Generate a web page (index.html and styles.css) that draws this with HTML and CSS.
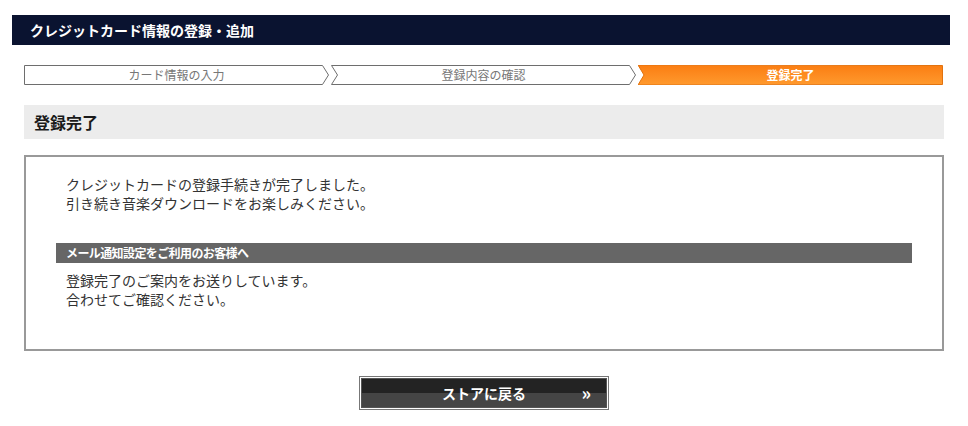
FILE: index.html
```html
<!DOCTYPE html>
<html lang="ja">
<head>
  <meta charset="UTF-8" />
  <title>クレジットカード情報の登録・追加</title>
  <link rel="stylesheet" href="styles.css">
</head>
<body>
  <header class="page-head">
    <h1>クレジットカード情報の登録・追加</h1>
  </header>
  <main class="wrap">
    <ol class="steps">
      <li class="step">
        <svg class="step-shape" width="305" height="20" viewBox="0 0 305 20">
          <polygon points="0.5,0.5 298.5,0.5 304.5,10 298.5,19.5 0.5,19.5" fill="#fff" stroke="#6e6e6e" />
        </svg>
        <span>カード情報の入力</span>
      </li>
      <li class="step">
        <svg class="step-shape" width="305" height="20" viewBox="0 0 305 20">
          <polygon points="0.5,0.5 298.5,0.5 304.5,10 298.5,19.5 0.5,19.5 6.5,10" fill="#fff" stroke="#6e6e6e" />
        </svg>
        <span>登録内容の確認</span>
      </li>
      <li class="step current">
        <svg class="step-shape" width="305" height="20" viewBox="0 0 305 20">
          <defs>
            <linearGradient id="orange" x1="0" y1="0" x2="0" y2="1">
              <stop offset="0" stop-color="#fb7d12" />
              <stop offset="1" stop-color="#ff9a2e" />
            </linearGradient>
          </defs>
          <polygon points="0,0 304.5,0.5 304.5,19.5 0,20 6,10" fill="url(#orange)" stroke="#e2720e" />
        </svg>
        <span>登録完了</span>
      </li>
    </ol>

    <h2 class="section-title">登録完了</h2>

    <div class="result-box">
      <p class="msg">クレジットカードの登録手続きが完了しました。<br>引き続き音楽ダウンロードをお楽しみください。</p>
      <h3 class="sub-bar">メール通知設定をご利用のお客様へ</h3>
      <p class="msg msg-after">登録完了のご案内をお送りしています。<br>合わせてご確認ください。</p>
    </div>

    <div class="actions">
      <a class="back-btn" href="#">
        <span class="btn-inner">
          <span class="label">ストアに戻る</span>
          <span class="arrow">»</span>
        </span>
      </a>
    </div>
  </main>
</body>
</html>
```

FILE: styles.css
```css
body {
  margin: 0;
  padding: 0;
  background: #fff;
  font-family: "Noto Sans CJK JP", "Noto Sans", sans-serif;
  color: #333;
}
.page-head {
  width: 938px;
  height: 30px;
  margin: 15px 0 0 12px;
  background-color: #0a1330;
  display: flex;
  align-items: center;
}
.page-head h1 {
  margin: 0 0 0 18px;
  font-size: 14px;
  font-weight: bold;
  color: #fff;
}
.wrap {
  width: 920px;
  margin-left: 24px;
}
.steps {
  list-style: none;
  margin: 20px 0 0;
  padding: 0;
  display: flex;
  gap: 2px;
  height: 20px;
}
.step {
  position: relative;
  width: 305px;
  height: 20px;
  display: flex;
  align-items: center;
  justify-content: center;
  font-size: 12px;
  color: #777;
}
.step-shape {
  position: absolute;
  top: 0;
  left: 0;
}
.step span {
  position: relative;
  line-height: 20px;
}
.step.current {
  color: #fff;
  font-weight: bold;
}
.section-title {
  margin: 20px 0 0;
  height: 34px;
  padding-left: 10px;
  background-color: #ececec;
  font-size: 16px;
  font-weight: bold;
  color: #1a1a1a;
  display: flex;
  align-items: center;
}
.result-box {
  margin-top: 16px;
  height: 196px;
  box-sizing: border-box;
  border: 2px solid #999;
  padding: 18px 30px 0;
}
.msg {
  margin: 0;
  padding-left: 10px;
  font-size: 14px;
  line-height: 19px;
}
.sub-bar {
  margin: 30px 0 0;
  height: 20px;
  padding-left: 10px;
  background-color: #666;
  color: #fff;
  font-size: 12px;
  font-weight: bold;
  line-height: 20px;
  letter-spacing: -0.6px;
}
.msg-after {
  margin-top: 8px;
}
.actions {
  display: flex;
  justify-content: center;
  margin-top: 25px;
}
.back-btn {
  display: block;
  width: 246px;
  height: 30px;
  border: 1px solid #777;
  padding: 1px;
  background: #fff;
  text-decoration: none;
  color: #fff;
  font-weight: bold;
}
.btn-inner {
  position: relative;
  display: flex;
  align-items: center;
  justify-content: center;
  box-sizing: border-box;
  height: 30px;
  border: 1px solid #555;
  background: linear-gradient(#232323 0, #232323 50%, #454545 50%, #454545 100%);
}
.back-btn .label {
  font-size: 14px;
}
.back-btn .arrow {
  position: absolute;
  right: 15px;
  top: 0;
  font-size: 18px;
  line-height: 27px;
}
```
